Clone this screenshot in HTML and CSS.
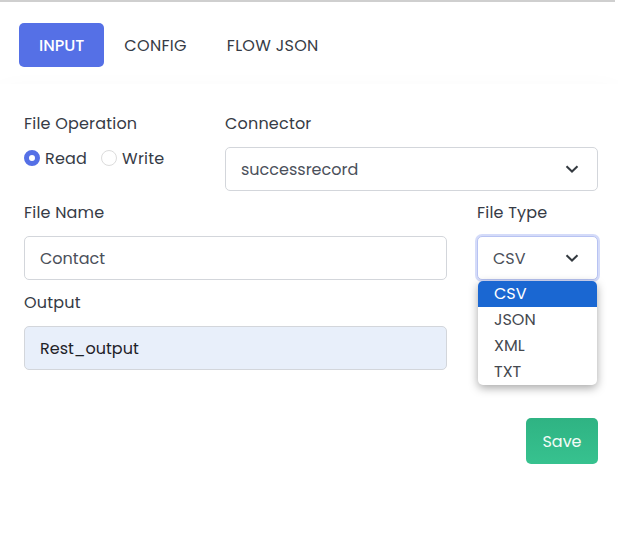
FILE: index.html
```html
<!DOCTYPE html>
<html>
<head>
<meta charset="utf-8">
<link rel="stylesheet" href="styles.css">
</head>
<body>
<div class="topline"></div>
<nav class="tabs">
  <span class="tab active">INPUT</span>
  <span class="tab">CONFIG</span>
  <span class="tab">FLOW JSON</span>
</nav>
<section class="card">
  <div class="row">
    <div class="field op">
      <label class="label">File Operation</label>
      <div class="radios">
        <span class="radio checked"></span><span class="rtext">Read</span>
        <span class="radio"></span><span class="rtext">Write</span>
      </div>
    </div>
    <div class="field grow">
      <label class="label">Connector</label>
      <div class="control select">
        <span>successrecord</span>
        <svg class="chev" width="14" height="8" viewBox="0 0 14 8"><path d="M1.5 1.2 7 6.5l5.5-5.3" fill="none" stroke="#343a40" stroke-width="2"/></svg>
      </div>
    </div>
  </div>
  <div class="row r2">
    <div class="field wide">
      <label class="label">File Name</label>
      <div class="control">Contact</div>
    </div>
    <div class="field type">
      <label class="label">File Type</label>
      <div class="control select focus">
        <span>CSV</span>
        <svg class="chev" width="14" height="8" viewBox="0 0 14 8"><path d="M1.5 1.2 7 6.5l5.5-5.3" fill="none" stroke="#343a40" stroke-width="2"/></svg>
      </div>
      <ul class="menu">
        <li class="sel">CSV</li>
        <li>JSON</li>
        <li>XML</li>
        <li>TXT</li>
      </ul>
    </div>
  </div>
  <div class="row last">
    <div class="field wide">
      <label class="label">Output</label>
      <div class="control filled">Rest_output</div>
    </div>
  </div>
  <div class="actions">
    <button class="save">Save</button>
  </div>
</section>
</body>
</html>
```
FILE: styles.css
```css
* { box-sizing: border-box; }
body {
  margin: 0;
  background: #fff;
  font-family: "Poppins", "Inter", "Open Sans", sans-serif;
  font-size: 16px;
  color: #40454f;
}
.topline {
  height: 2px;
  width: 615px;
  background: #cfcfcf;
}
.tabs {
  display: flex;
  padding: 21px 0 0 19px;
  height: 82px;
}
.tab {
  height: 44px;
  padding: 0 20px;
  display: flex;
  align-items: center;
  font-size: 16px;
  font-weight: 400;
  letter-spacing: 0.3px;
  color: #363b46;
  border-radius: 5px;
}
.tab.active {
  background: #5570e6;
  color: #fff;
  font-weight: 500;
  letter-spacing: 0;
}
.card {
  background: #fff;
  padding: 29px 20px 12px 24px;
  box-shadow: 0 12px 28px rgba(0, 0, 0, 0.05);
}
.row {
  display: flex;
  gap: 30px;
  margin-bottom: 11px;
}
.row.r2 { margin-bottom: 12px; }
.row.last { margin-bottom: 0; }
.field { display: flex; flex-direction: column; position: relative; }
.field.op { width: 171px; }
.field.grow { flex: 1; }
.field.wide { width: 423px; }
.field.type { width: 121px; }
.label {
  line-height: 22px;
  margin-bottom: 12px;
  font-weight: 400;
  letter-spacing: 0.2px;
  color: #363b46;
}
.radios {
  display: flex;
  align-items: center;
  height: 22px;
}
.radio {
  width: 16px;
  height: 16px;
  border-radius: 50%;
  border: 1px solid #dcdcdc;
  margin-right: 5px;
}
.radio.checked {
  border: 5px solid #5570e6;
}
.rtext { margin-right: 14px; font-weight: 400; letter-spacing: 0.2px; color: #363b46; }
.control {
  height: 44px;
  border: 1px solid #d3d6db;
  border-radius: 5px;
  padding: 0 15px;
  display: flex;
  align-items: center;
  color: #4b505a;
  background: #fff;
}
.select { justify-content: space-between; padding-right: 18px; }
.select.focus {
  border-color: #b8c3f2;
  box-shadow: 0 0 0 2px rgba(85, 112, 230, 0.25);
}
.control.filled {
  background: #e8effa;
  color: #1f2228;
}
.menu {
  position: absolute;
  top: 79px;
  left: 1px;
  width: 119px;
  margin: 0;
  padding: 0;
  list-style: none;
  background: #fff;
  border-radius: 5px;
  box-shadow: 0 3px 10px rgba(0, 0, 0, 0.35);
  overflow: hidden;
  z-index: 2;
}
.menu li {
  height: 26px;
  line-height: 26px;
  padding-left: 16px;
  font-size: 16px;
  color: #45494f;
}
.menu li.sel {
  background: #1a67d2;
  color: #fff;
}
.actions {
  display: flex;
  justify-content: flex-end;
  margin-top: 48px;
}
.save {
  width: 72px;
  height: 46px;
  border: none;
  border-radius: 5px;
  background: linear-gradient(#2fb383, #37c28f);
  color: #f4fbf7;
  font-family: inherit;
  font-size: 16px;
  font-weight: 400;
}
```
